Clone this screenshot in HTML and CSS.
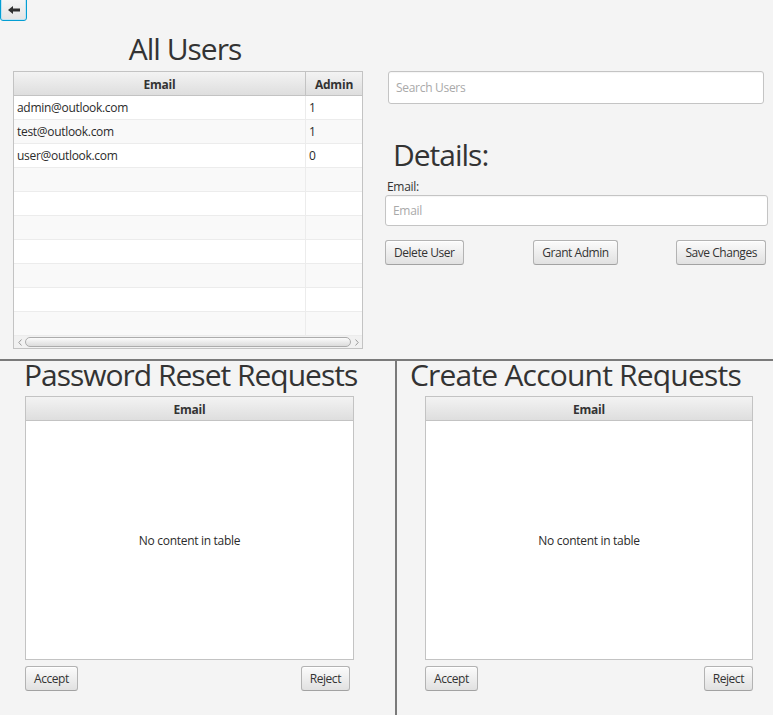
FILE: index.html
```html
<!DOCTYPE html>
<html>
<head>
<meta charset="utf-8">
<title>Admin</title>
<link rel="stylesheet" href="styles.css">
</head>
<body>
<div class="app">
  <section class="top">
    <button class="back" aria-label="Back">
      <svg width="12" height="8" viewBox="0 0 12 8"><polygon points="0,4 5,0 5,2.5 12,2.5 12,5.5 5,5.5 5,8" fill="#2f2f2f"/></svg>
    </button>
    <div class="top-main">
      <div class="users-col">
        <h1 class="title users-title">All Users</h1>
        <div class="table users-table">
          <div class="thead">
            <div class="th col-email">Email</div>
            <div class="th col-admin">Admin</div>
          </div>
          <div class="tbody">
            <div class="tr"><div class="td col-email">admin@outlook.com</div><div class="td col-admin">1</div></div>
            <div class="tr"><div class="td col-email">test@outlook.com</div><div class="td col-admin">1</div></div>
            <div class="tr"><div class="td col-email">user@outlook.com</div><div class="td col-admin">0</div></div>
            <div class="tr"><div class="td col-email"></div><div class="td col-admin"></div></div>
            <div class="tr"><div class="td col-email"></div><div class="td col-admin"></div></div>
            <div class="tr"><div class="td col-email"></div><div class="td col-admin"></div></div>
            <div class="tr"><div class="td col-email"></div><div class="td col-admin"></div></div>
            <div class="tr"><div class="td col-email"></div><div class="td col-admin"></div></div>
            <div class="tr"><div class="td col-email"></div><div class="td col-admin"></div></div>
            <div class="tr"><div class="td col-email"></div><div class="td col-admin"></div></div>
          </div>
          <div class="hscroll">
            <div class="sb-arrow"><svg width="4" height="7" viewBox="0 0 4 7"><polyline points="3.5,0.5 0.8,3.5 3.5,6.5" fill="none" stroke="#9a9a9a" stroke-width="1"/></svg></div>
            <div class="sb-thumb"></div>
            <div class="sb-arrow"><svg width="4" height="7" viewBox="0 0 4 7"><polyline points="0.5,0.5 3.2,3.5 0.5,6.5" fill="none" stroke="#9a9a9a" stroke-width="1"/></svg></div>
          </div>
        </div>
      </div>
      <div class="details-col">
        <input class="field search" type="text" placeholder="Search Users">
        <h2 class="title details-title">Details:</h2>
        <label class="field-label">Email:</label>
        <input class="field email" type="text" placeholder="Email">
        <div class="actions">
          <button class="btn btn-start">Delete User</button>
          <button class="btn btn-center">Grant Admin</button>
          <button class="btn btn-end">Save Changes</button>
        </div>
      </div>
    </div>
  </section>
  <div class="hdivider"></div>
  <section class="bottom">
    <div class="panel panel-left">
      <h2 class="title req-title">Password Reset Requests</h2>
      <div class="req-body">
        <div class="table req-table">
          <div class="thead"><div class="th col-full">Email</div></div>
          <div class="empty">No content in table</div>
        </div>
        <div class="req-actions">
          <button class="btn">Accept</button>
          <button class="btn">Reject</button>
        </div>
      </div>
    </div>
    <div class="vdivider"></div>
    <div class="panel panel-right">
      <h2 class="title req-title">Create Account Requests</h2>
      <div class="req-body">
        <div class="table req-table">
          <div class="thead"><div class="th col-full">Email</div></div>
          <div class="empty">No content in table</div>
        </div>
        <div class="req-actions">
          <button class="btn">Accept</button>
          <button class="btn">Reject</button>
        </div>
      </div>
    </div>
  </section>
</div>
</body>
</html>
```

FILE: styles.css
```css
* {
  box-sizing: border-box;
  margin: 0;
  padding: 0;
}

html, body {
  width: 773px;
  height: 715px;
  overflow: hidden;
}

body {
  background: #f4f4f4;
  font-family: "Open Sans", sans-serif;
  font-size: 12px;
  letter-spacing: -0.3px;
  color: #333333;
}

.app {
  display: flex;
  flex-direction: column;
  height: 715px;
}

/* ---------- top section ---------- */
.top {
  height: 359px;
  display: flex;
  flex-direction: column;
}

.back {
  width: 27px;
  height: 25px;
  margin-top: -4px;
  padding-top: 3px;
  display: flex;
  align-items: center;
  justify-content: center;
  border: 1px solid #039ed3;
  border-radius: 3px;
  background: linear-gradient(#f7f7f7, #e4e4e4);
  box-shadow: inset 0 0 0 1px #bfe3f2;
}

.top-main {
  display: flex;
  padding-left: 13px;
}

.users-col {
  width: 350px;
  display: flex;
  flex-direction: column;
}

.title {
  font-family: "Open Sans", sans-serif;
  font-weight: 400;
  font-size: 30px;
  letter-spacing: -1px;
  color: #333333;
}

.users-title {
  margin-top: 8px;
  margin-bottom: 2px;
  line-height: 40px;
  text-align: center;
  padding-right: 6px;
}

/* ---------- tables ---------- */
.table {
  border: 1px solid #c3c3c3;
  background: #ffffff;
  display: flex;
  flex-direction: column;
}

.thead {
  display: flex;
  height: 24px;
  border-bottom: 1px solid #c3c3c3;
  background: linear-gradient(#f3f3f3, #dedede);
}

.th {
  display: flex;
  align-items: center;
  justify-content: center;
  font-weight: 700;
  color: #333333;
  letter-spacing: -0.2px;
  padding-top: 1px;
}

.users-table .col-email {
  width: 292px;
  border-right: 1px solid #c3c3c3;
}

.users-table .col-admin {
  width: 56px;
}

.users-table .tbody .col-email {
  border-right: 1px solid #ececec;
}

.col-full {
  flex: 1;
}

.tr {
  display: flex;
  height: 24px;
  border-bottom: 1px solid #ececec;
  background: #ffffff;
}

.tr:nth-child(even) {
  background: #f9f9f9;
}

.td {
  display: flex;
  align-items: center;
  padding-left: 3px;
  color: #2b2b2b;
}

.hscroll {
  height: 12px;
  display: flex;
  align-items: center;
  background: #f1f1f1;
}

.sb-arrow {
  width: 11px;
  height: 12px;
  display: flex;
  align-items: center;
  justify-content: center;
}

.sb-thumb {
  flex: 1;
  height: 10px;
  border: 1px solid #acacac;
  border-radius: 5px;
  background: linear-gradient(#fbfbfb, #dcdcdc);
}

/* ---------- details ---------- */
.details-col {
  width: 383px;
  margin-left: 22px;
  padding-top: 50px;
  display: flex;
  flex-direction: column;
}

.field {
  display: block;
  height: 31px;
  border: 1px solid #c4c4c4;
  border-radius: 3px;
  background: #ffffff;
  box-shadow: inset 0 1px 1px rgba(0, 0, 0, 0.04);
  padding: 0 7px;
  font-family: "Open Sans", sans-serif;
  font-size: 12px;
  letter-spacing: -0.3px;
  color: #333333;
  outline: none;
}

.field::placeholder {
  color: #a9a9a9;
  opacity: 1;
}

.search {
  height: 33px;
  margin: 0 4px 0 3px;
}

.details-title {
  margin-top: 31px;
  margin-left: 8px;
  line-height: 40px;
}

.field-label {
  margin-top: 4px;
  margin-left: 2px;
  line-height: 16px;
  color: #333333;
}

.email {
  width: 383px;
}

.actions {
  margin-top: 14px;
  width: 381px;
  display: grid;
  grid-template-columns: 1fr auto 1fr;
  align-items: center;
}

.btn-start {
  justify-self: start;
}

.btn-center {
  justify-self: center;
}

.btn-end {
  justify-self: end;
}

.btn {
  height: 25px;
  padding: 0 8px;
  border: 1px solid #b3b3b3;
  border-bottom-color: #a2a2a2;
  border-radius: 3px;
  background: linear-gradient(#fbfbfb, #e1e1e1);
  box-shadow: inset 0 1px 0 #ffffff;
  font-family: "Open Sans", sans-serif;
  font-size: 12px;
  letter-spacing: -0.45px;
  color: #333333;
}

/* ---------- dividers ---------- */
.hdivider {
  height: 2px;
  background: #7a7a7a;
}

.bottom {
  flex: 1;
  display: flex;
}

.vdivider {
  width: 2px;
  background: #7a7a7a;
}

/* ---------- request panels ---------- */
.panel {
  display: flex;
  flex-direction: column;
}

.panel-left {
  width: 395px;
  padding-left: 25px;
}

.panel-right {
  flex: 1;
  padding-left: 28px;
}

.req-title {
  line-height: 24px;
  padding-top: 2px;
  white-space: nowrap;
}

.panel-left .req-title {
  margin-left: -1px;
}

.panel-right .req-title {
  margin-left: -15px;
  letter-spacing: -0.8px;
}

.req-body {
  margin-top: 9px;
  display: flex;
  flex-direction: column;
}

.panel-left .req-body {
  width: 329px;
}

.panel-right .req-body {
  width: 328px;
}

.req-table {
  height: 264px;
}

.empty {
  flex: 1;
  display: flex;
  align-items: center;
  justify-content: center;
  color: #2b2b2b;
}

.req-actions {
  margin-top: 6px;
  display: flex;
  justify-content: space-between;
}

.panel-left .req-actions {
  padding-right: 4px;
}
```
